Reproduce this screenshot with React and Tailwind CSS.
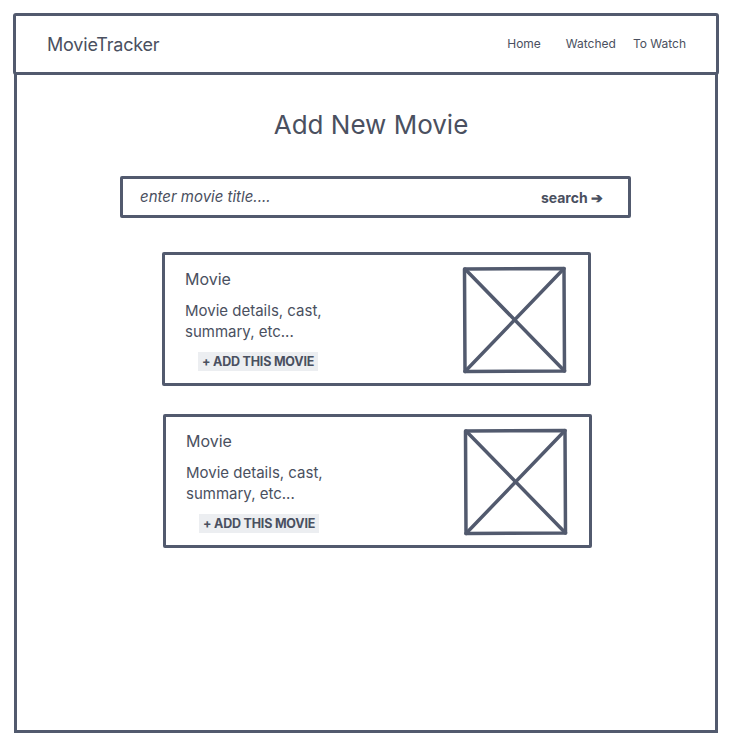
const ink = '#525a6e'

function Placeholder() {
  return (
    <svg width="105" height="108" viewBox="0 0 105 108" fill="none"
      stroke={ink} strokeWidth="3.5" strokeLinecap="round" strokeLinejoin="round"
      aria-hidden="true">
      <path d="M2.5 3 L102 2.5 L102.5 105 L3 105.5 Z" />
      <path d="M3 3 L102.5 105" />
      <path d="M102 2.5 L3 105.5" />
    </svg>
  )
}

function MovieCard({ offset }) {
  return (
    <div className={`${offset} w-[429px] h-[134px] border-[3px] border-[#525a6e] rounded-[2px] flex justify-between pl-[20px] pr-[21px] pt-[12px]`}>
      <div className="flex flex-col">
        <p className="text-[16px] leading-[24px]">Movie</p>
        <p className="mt-[9px] text-[15px] leading-[21px] w-[160px]">Movie details, cast, summary, etc...</p>
        <button className="mt-[10px] ml-[13px] self-start bg-[#eceef1] px-[4px] h-[19px] text-[12.5px] leading-[19px] font-bold tracking-[-0.2px] text-[#4a5060]">
          + ADD THIS MOVIE
        </button>
      </div>
      <div className="-mt-[1px]">
        <Placeholder />
      </div>
    </div>
  )
}

export default function App() {
  return (
    <div className="min-h-[756px] bg-white text-[#4a5060] pt-[13px]" style={{ fontFamily: 'Inter, "Noto Sans", sans-serif' }}>
      <div className="w-[706px] ml-[13px]">
        {/* Header */}
        <header className="h-[62px] border-[3px] border-[#525a6e] rounded-[3px] flex items-center justify-between pl-[31px] pr-[30px]">
          <span className="text-[18px] tracking-[-0.2px]">MovieTracker</span>
          <nav className="flex items-center text-[12px]">
            <a>Home</a>
            <a className="ml-[25px]">Watched</a>
            <a className="ml-[17px]">To Watch</a>
          </nav>
        </header>

        {/* Body */}
        <main className="ml-[1px] w-[704px] h-[660px] -mt-[2px] border-x-[3px] border-b-[3px] border-[#525a6e] flex flex-col pt-[36px]">
          <h1 className="text-center ml-[10px] text-[26px] leading-[32px]">Add New Movie</h1>

          <div className="mt-[35px] ml-[103px] w-[511px] h-[42px] border-[3px] border-[#525a6e] rounded-[2px] flex items-center justify-between pl-[17px] pr-[25px]">
            <span className="italic text-[15px]">enter movie title....</span>
            <span className="font-bold text-[14px]">search ➔</span>
          </div>

          <div className="mt-[34px] flex flex-col gap-[28px]">
            <MovieCard offset="ml-[145px]" />
            <MovieCard offset="ml-[146px]" />
          </div>
        </main>
      </div>
    </div>
  )
}
